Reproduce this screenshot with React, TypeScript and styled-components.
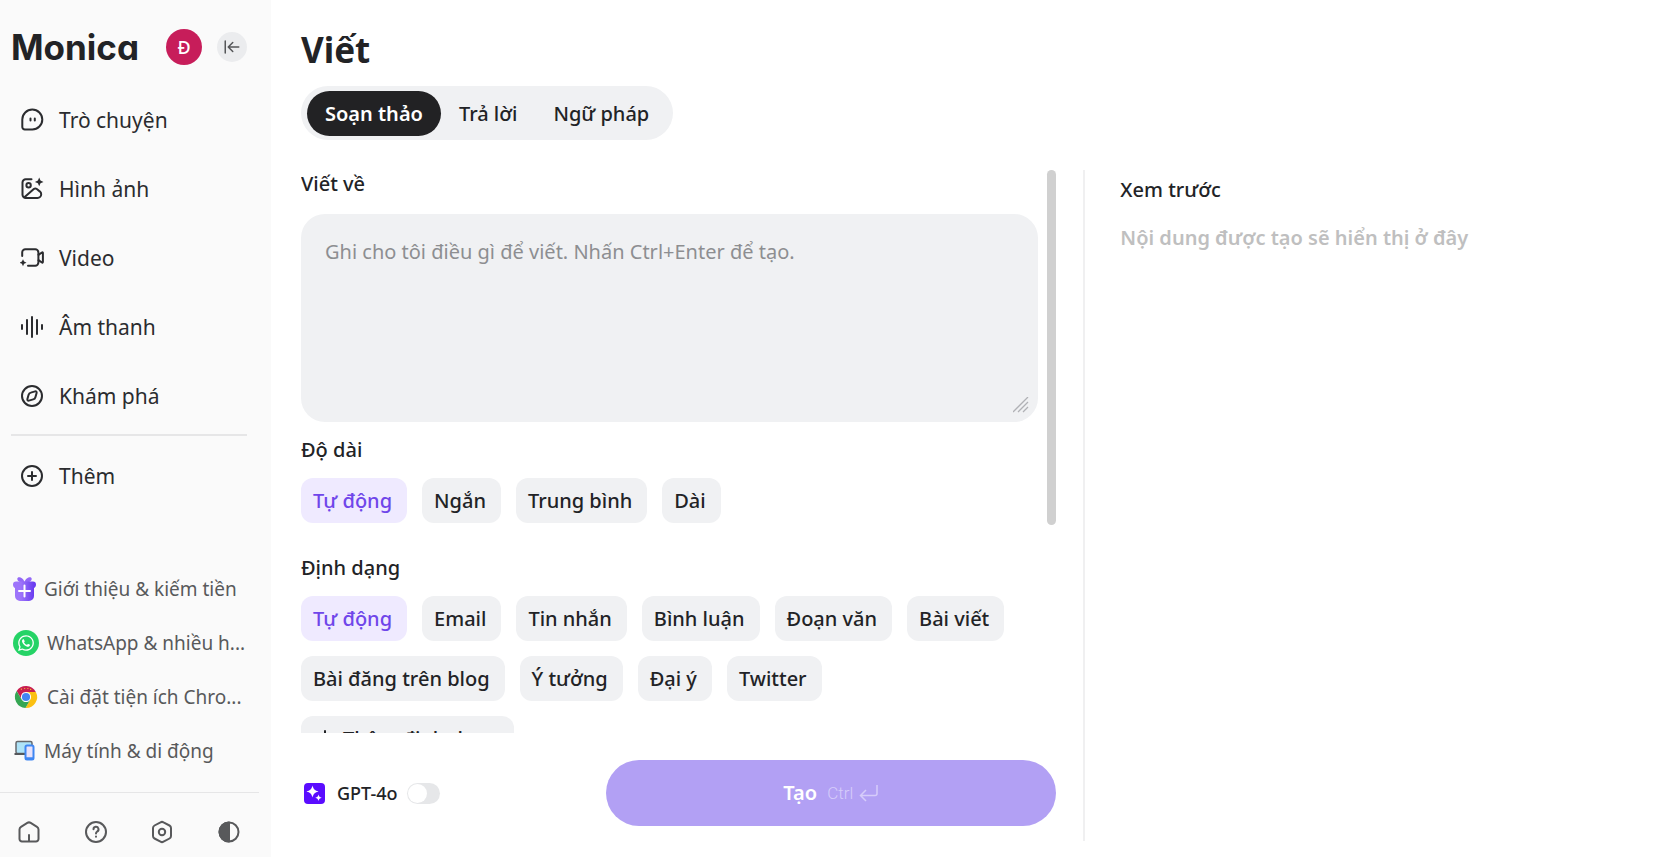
import React, { useState } from "react";
import styled, { createGlobalStyle } from "styled-components";
import { FaWhatsapp } from "react-icons/fa";

const GlobalStyle = createGlobalStyle`
  *, *::before, *::after { box-sizing: border-box; }
  html, body, #root { height: 100%; }
  body {
    margin: 0;
    background: #fff;
    color: #222326;
    font-family: "Noto Sans", "Open Sans", sans-serif;
    font-size: 20px;
    line-height: 28px;
  }
  button, textarea { font: inherit; color: inherit; }
  button { border: 0; padding: 0; background: none; cursor: pointer; }
  a { color: inherit; text-decoration: none; }
  h1, h2, p { margin: 0; font: inherit; }
`;

const Shell = styled.div`
  display: flex;
  height: 100vh;
  overflow: hidden;
`;

const Sidebar = styled.aside`
  display: flex;
  flex: 0 0 271px;
  flex-direction: column;
  min-width: 0;
  background: #fafafa;
`;

const Brand = styled.header`
  display: flex;
  align-items: center;
  height: 85px;
  padding: 9px 24px 0 11px;
`;

const Logo = styled.span`
  flex: 1;
  font-family: Inter, sans-serif;
  font-size: 35px;
  font-weight: 700;
  line-height: 40px;
  font-feature-settings: "cv11";
`;

const Avatar = styled.button`
  width: 36px;
  height: 36px;
  margin-right: 15px;
  border-radius: 50%;
  background: #c71d5a;
  color: #fff;
  font-size: 18px;
  font-weight: 500;
  line-height: 36px;
`;

const CollapseButton = styled.button`
  display: grid;
  place-items: center;
  width: 30px;
  height: 30px;
  border-radius: 50%;
  background: #ebecee;
  color: #555658;
`;

const Nav = styled.nav`
  display: flex;
  flex-direction: column;
`;

const NavLink = styled.a`
  display: flex;
  align-items: center;
  gap: 15px;
  height: 69px;
  padding-left: 20px;
  color: #2b2c2f;
  font-size: 21px;

  svg { flex: none; }
`;

const NavDivider = styled.hr`
  width: 236px;
  height: 2px;
  margin: 4px 0 5px 11px;
  border: 0;
  background: #e6e6e7;
`;

const Promos = styled.div`
  display: flex;
  flex-direction: column;
  margin-top: auto;
  padding: 0 8px 14px 13px;
`;

const PromoLink = styled.a`
  display: flex;
  align-items: center;
  gap: 8px;
  height: 54px;
  color: #58595b;
  font-size: 19px;
  white-space: nowrap;

  svg, i { flex: none; }
`;

const WhatsAppBadge = styled.i`
  display: grid;
  place-items: center;
  width: 26px;
  height: 26px;
  border-radius: 50%;
  background: #25d366;
  color: #fff;
`;

const FooterBar = styled.footer`
  display: flex;
  justify-content: space-between;
  width: 259px;
  height: 65px;
  padding: 27px 18px 0 17px;
  border-top: 1px solid #e6e6e7;
`;

const IconButton = styled.button`
  width: 24px;
  height: 24px;
  color: #58595b;
  line-height: 0;
`;

const Main = styled.main`
  display: flex;
  flex: 1;
  flex-direction: column;
  min-width: 0;
  padding: 26px 0 16px 30px;
`;

const Title = styled.h1`
  font-size: 35px;
  font-weight: 700;
  line-height: 48px;
`;

const Tabs = styled.div`
  display: flex;
  align-self: flex-start;
  height: 54px;
  margin: 12px 0 30px;
  padding: 5px 6px 4px;
  border-radius: 27px;
  background: #f0f1f3;
`;

const Tab = styled.button<{ $active?: boolean }>`
  padding: 0 18px;
  border-radius: 23px;
  background: ${(p) => (p.$active ? "#222224" : "transparent")};
  color: ${(p) => (p.$active ? "#fff" : "#222326")};
  font-weight: ${(p) => (p.$active ? 600 : 500)};
`;

const Columns = styled.div`
  display: grid;
  flex: 1;
  grid-template-columns: minmax(0, 26fr) minmax(0, 19fr);
  min-height: 0;
`;

const Editor = styled.section`
  display: flex;
  flex-direction: column;
  min-height: 0;
  padding-right: 27px;
`;

const ScrollRow = styled.div`
  display: flex;
  flex: 1;
  gap: 9px;
  min-height: 0;
`;

const Form = styled.div`
  flex: 1;
  min-width: 0;
  overflow-y: auto;
  scrollbar-width: none;
`;

const ScrollTrack = styled.div`
  flex: 0 0 9px;
`;

const ScrollThumb = styled.div`
  height: 63%;
  border-radius: 5px;
  background: #d0d0d0;
`;

const Label = styled.label`
  display: block;
  font-weight: 500;
`;

const PromptBox = styled.div`
  position: relative;
  margin: 16px 0 14px;

  svg {
    position: absolute;
    right: 9px;
    bottom: 9px;
    pointer-events: none;
  }
`;

const Prompt = styled.textarea`
  display: block;
  width: 100%;
  height: 208px;
  padding: 24px;
  border: 0;
  border-radius: 24px;
  outline: 0;
  background: #f0f1f3;
  resize: none;

  &::placeholder { color: #8d8e91; opacity: 1; }
`;

const Field = styled.div`
  margin-bottom: 31px;
`;

const Chips = styled.div`
  display: flex;
  flex-wrap: wrap;
  gap: 15px;
  margin-top: 14px;
`;

const Chip = styled.button<{ $active?: boolean }>`
  display: flex;
  align-items: center;
  gap: 6px;
  height: 45px;
  padding: 0 15px 0 12px;
  border-radius: 12px;
  background: ${(p) => (p.$active ? "#efeaff" : "#f0f1f3")};
  color: ${(p) => (p.$active ? "#7046ea" : "#222326")};
  font-weight: 500;
`;

const Actions = styled.div`
  display: flex;
  align-items: center;
  height: 108px;
  padding: 12px 0 0 3px;
`;

const ModelSwitch = styled.label`
  display: flex;
  align-items: center;
  flex: 1;
  gap: 12px;
  font-size: 18px;
  font-weight: 500;
`;

const Toggle = styled.input`
  appearance: none;
  width: 33px;
  height: 21px;
  margin: 0 0 0 -3px;
  padding: 1px;
  border-radius: 11px;
  background: #e6e7e9;
  cursor: pointer;

  &::before {
    content: "";
    display: block;
    width: 19px;
    height: 19px;
    border-radius: 50%;
    background: #fff;
  }
  &:checked { background: #6b40e8; }
  &:checked::before { margin-left: 12px; }
`;

const CreateButton = styled.button`
  display: flex;
  align-items: center;
  justify-content: center;
  gap: 10px;
  flex: 0 0 450px;
  height: 66px;
  border-radius: 33px;
  background: #b2a0f4;
  color: #fff;
  font-weight: 600;

  small {
    display: flex;
    align-items: center;
    gap: 6px;
    color: #d6ccfa;
    font-family: Roboto, sans-serif;
    font-size: 17px;
    font-weight: 300;
  }
`;

const Preview = styled.section`
  display: flex;
  flex-direction: column;
  gap: 20px;
  padding: 6px 24px 0 35px;
  border-left: 2px solid #f0f0f1;
`;

const PreviewTitle = styled.h2`
  font-weight: 500;
`;

const PreviewHint = styled.p`
  color: #bfbfc0;
  font-weight: 600;
`;

type IconProps = { children: React.ReactNode; size?: number; width?: number };

function Icon({ children, size = 24, width = 2 }: IconProps) {
  return (
    <svg width={size} height={size} viewBox="0 0 24 24" fill="none" stroke="currentColor" strokeWidth={width} strokeLinecap="round" strokeLinejoin="round" aria-hidden="true">
      {children}
    </svg>
  );
}

const navItems = [
  {
    label: "Trò chuyện",
    icon: <><path d="M2.300 11.500a10 10 0 1 1 10 10H4.800a2.500 2.500 0 0 1-2.500-2.500z" /><path d="M10.500 10.500v2M14.800 10.500v2" /></>,
  },
  {
    label: "Hình ảnh",
    icon: <><path d="M11.500 2.300H5.700A3.200 3.200 0 0 0 2.500 5.500v12.300A3.200 3.200 0 0 0 5.700 21h11.800a3.700 3.700 0 0 0 3.700-3.700c0-1.200-.4-2-1.200-2.700l-3.200-2.600c-1-.8-2-.8-3 .1l-9.400 8.200" /><circle cx="8.600" cy="8.200" r="2.200" /><path d="M19.200 .6l1.300 3 3 1.300-3 1.300-1.300 3-1.300-3-3-1.300 3-1.300z" fill="currentColor" stroke="none" /></>,
  },
  {
    label: "Video",
    icon: <><path d="M2.200 10V6.400a3.200 3.200 0 0 1 3.200-3.200h9.800a3.200 3.200 0 0 1 3.200 3.200v10.200a3.200 3.200 0 0 1-3.200 3.200H8" /><path d="M18.500 8.800l3.400-2.300c.5-.3 1 0 1 .5v9c0 .5-.5.8-1 .5l-3.400-2.300" /><path d="M3 13.200l1.100 2.400 2.400 1.100-2.400 1.100-1.100 2.400-1.100-2.400-2.400-1.100 2.400-1.100z" fill="currentColor" stroke="none" /></>,
  },
  {
    label: "Âm thanh",
    icon: <path d="M2 10v4M7 5v14M12 2v20M17 5v14M22 10v4" />,
  },
  {
    label: "Khám phá",
    icon: <><circle cx="12" cy="12" r="10" /><path d="M10.800 8.600l4.300-1.200c1.100-.3 1.800.4 1.500 1.500l-1.200 4.300c-.3 1.100-1 1.900-2.200 2.200l-4.300 1.200c-1.100.3-1.800-.4-1.500-1.500l1.200-4.300c.3-1.100 1-1.900 2.200-2.200z" /></>,
  },
];

const lengths = ["Tự động", "Ngắn", "Trung bình", "Dài"];
const formats = ["Tự động", "Email", "Tin nhắn", "Bình luận", "Đoạn văn", "Bài viết", "Bài đăng trên blog", "Ý tưởng", "Đại ý", "Twitter"];
const tabs = ["Soạn thảo", "Trả lời", "Ngữ pháp"];

function GiftIcon() {
  return (
    <svg width="23" height="24" viewBox="0 0 23 24" aria-hidden="true">
      <defs>
        <linearGradient id="gift" x1="0" x2="1">
          <stop offset=".35" stopColor="#9d74fa" />
          <stop offset=".9" stopColor="#6a3df0" />
        </linearGradient>
      </defs>
      <path d="M11.500 6C8 6 4.500 4.500 4.300 2 4.200.2 6-.2 8 .7c1.800.8 3 2.300 3.500 4.300.5-2 1.700-3.500 3.500-4.300 2-.9 3.800-.5 3.700 1.300C18.500 4.500 15 6 11.500 6z" fill="#9468f7" />
      <path d="M3 4.500h17a3 3 0 0 1 3 3c0 2-.8 3-2 3.500V19a5 5 0 0 1-5 5H7a5 5 0 0 1-5-5v-8C.8 10.500 0 9.500 0 7.500a3 3 0 0 1 3-3z" fill="url(#gift)" />
      <path d="M11.500 8.500v11M6 14h11" stroke="#fff" strokeWidth="2" strokeLinecap="round" />
    </svg>
  );
}

function ChromeIcon() {
  const wedge = "M1.900 5.510A12 12 0 0 1 22.670 6.500H12A5.500 5.500 0 0 0 7.240 14.750Z";
  return (
    <svg width="26" height="24" viewBox="-1 -1 26 26" aria-hidden="true">
      <circle cx="12" cy="12" r="6" fill="#fff" />
      <path d={wedge} fill="#c81e50" />
      <path d={wedge} fill="#fbc012" transform="rotate(120 12 12)" />
      <path d={wedge} fill="#35a653" transform="rotate(240 12 12)" />
      <circle cx="12" cy="12" r="4.400" fill="#4285f4" />
      <path d="M7 3.500h.1M10.500 2.800h.1M14 2.800h.1M17 3.800h.1" stroke="#f4c430" strokeWidth="1.300" strokeLinecap="round" />
    </svg>
  );
}

function DevicesIcon() {
  return (
    <svg width="23" height="22" viewBox="0 0 23 22" aria-hidden="true">
      <rect x="3" y="1.500" width="16" height="12" rx="1.500" fill="#aee3f8" stroke="#66686c" strokeWidth="1.500" />
      <path d="M1.500 14h12" stroke="#55575b" strokeWidth="2" />
      <rect x="12.500" y="5.500" width="8" height="14" rx="1.500" fill="#e8e2fb" stroke="#3f86f2" strokeWidth="2" />
      <path d="M13 18.500h7" stroke="#3f86f2" strokeWidth="2.500" />
    </svg>
  );
}

function ModelIcon() {
  return (
    <svg width="21" height="21" viewBox="0 0 21 21" aria-hidden="true">
      <rect width="21" height="21" rx="4" fill="#5a0cff" />
      <path d="M8.500 2.500c.9 3.600 2.200 5 6 6-3.800 1-5.100 2.400-6 6-.9-3.600-2.200-5-6-6 3.800-1 5.100-2.400 6-6zM14.500 11.500c.5 2 1.200 2.700 3.200 3.200-2 .5-2.700 1.200-3.200 3.200-.5-2-1.200-2.700-3.200-3.200 2-.5 2.700-1.200 3.200-3.200z" fill="#fff" />
    </svg>
  );
}

export default function App() {
  const [tab, setTab] = useState(0);
  const [length, setLength] = useState(0);
  const [format, setFormat] = useState(0);

  return (
    <>
      <GlobalStyle />
      <Shell>
        <Sidebar>
          <Brand>
            <Logo>Monica</Logo>
            <Avatar>Đ</Avatar>
            <CollapseButton aria-label="Thu gọn">
              <Icon size={18} width={2}>
                <path d="M3 4v16M21 12H8M13 6l-6 6 6 6" />
              </Icon>
            </CollapseButton>
          </Brand>
          <Nav>
            {navItems.map((item) => (
              <NavLink href="#" key={item.label}>
                <Icon>{item.icon}</Icon>
                {item.label}
              </NavLink>
            ))}
            <NavDivider />
            <NavLink href="#">
              <Icon>
                <circle cx="12" cy="12" r="10" />
                <path d="M12 8v8M8 12h8" />
              </Icon>
              Thêm
            </NavLink>
          </Nav>
          <Promos>
            <PromoLink href="#"><GiftIcon /><span>Giới thiệu &amp; kiếm tiền</span></PromoLink>
            <PromoLink href="#">
              <WhatsAppBadge><FaWhatsapp size={18} /></WhatsAppBadge>
              <span>WhatsApp &amp; nhiều h...</span>
            </PromoLink>
            <PromoLink href="#"><ChromeIcon /><span>Cài đặt tiện ích Chro...</span></PromoLink>
            <PromoLink href="#"><DevicesIcon /><span>Máy tính &amp; di động</span></PromoLink>
          </Promos>
          <FooterBar>
            <IconButton aria-label="Trang chủ">
              <Icon>
                <path d="M2.500 9.500c0-1.200.5-2.100 1.500-2.700l6.300-3.900c1.100-.7 2.300-.7 3.400 0L20 6.800c1 .6 1.500 1.500 1.500 2.700V19a2.500 2.500 0 0 1-2.500 2.500H5A2.500 2.500 0 0 1 2.500 19zM12 15v6" />
              </Icon>
            </IconButton>
            <IconButton aria-label="Trợ giúp">
              <Icon>
                <circle cx="12" cy="12" r="10" />
                <path d="M9.500 9.300a2.500 2.500 0 1 1 3.700 2.200c-.8.5-1.200.9-1.200 1.900M12 16.600v.1" />
              </Icon>
            </IconButton>
            <IconButton aria-label="Cài đặt">
              <Icon>
                <path d="M10.500 2.300a3 3 0 0 1 3 0l6 3.200c.9.500 1.500 1.400 1.500 2.500v8c0 1.100-.6 2-1.500 2.500l-6 3.200a3 3 0 0 1-3 0l-6-3.200C3.600 18 3 17.100 3 16V8c0-1.100.6-2 1.500-2.500z" />
                <circle cx="12" cy="12" r="3.200" />
              </Icon>
            </IconButton>
            <IconButton aria-label="Giao diện">
              <Icon>
                <circle cx="12" cy="12" r="9.500" />
                <path d="M12 2.500a9.500 9.500 0 0 0 0 19z" fill="currentColor" />
              </Icon>
            </IconButton>
          </FooterBar>
        </Sidebar>

        <Main>
          <Title>Viết</Title>
          <Tabs role="tablist">
            {tabs.map((name, i) => (
              <Tab key={name} role="tab" aria-selected={tab === i} $active={tab === i} onClick={() => setTab(i)}>
                {name}
              </Tab>
            ))}
          </Tabs>
          <Columns>
            <Editor>
              <ScrollRow>
                <Form>
                  <Label htmlFor="prompt">Viết về</Label>
                  <PromptBox>
                    <Prompt id="prompt" placeholder="Ghi cho tôi điều gì để viết. Nhấn Ctrl+Enter để tạo." />
                    <svg width="16" height="16" viewBox="0 0 16 16" stroke="#b0b1b5" strokeWidth="1.300" aria-hidden="true">
                      <path d="M0 15L15 0M5 15L15 5M10 15L15 10" />
                    </svg>
                  </PromptBox>
                  <Field>
                    <Label as="h2">Độ dài</Label>
                    <Chips>
                      {lengths.map((name, i) => (
                        <Chip key={name} $active={length === i} onClick={() => setLength(i)}>{name}</Chip>
                      ))}
                    </Chips>
                  </Field>
                  <Field>
                    <Label as="h2">Định dạng</Label>
                    <Chips>
                      {formats.map((name, i) => (
                        <Chip key={name} $active={format === i} onClick={() => setFormat(i)}>{name}</Chip>
                      ))}
                      <Chip>
                        <Icon><path d="M12 4v16M4 12h16" /></Icon>
                        Thêm định dạng
                      </Chip>
                    </Chips>
                  </Field>
                </Form>
                <ScrollTrack><ScrollThumb /></ScrollTrack>
              </ScrollRow>
              <Actions>
                <ModelSwitch>
                  <ModelIcon />
                  GPT-4o
                  <Toggle type="checkbox" />
                </ModelSwitch>
                <CreateButton>
                  Tạo
                  <small>
                    Ctrl
                    <svg width="20" height="20" viewBox="0 0 20 20" fill="none" stroke="currentColor" strokeWidth="1.500" aria-hidden="true">
                      <path d="M18 2v8.500a2 2 0 0 1-2 2H2M7 7l-5.500 5.500L7 18" />
                    </svg>
                  </small>
                </CreateButton>
              </Actions>
            </Editor>
            <Preview>
              <PreviewTitle>Xem trước</PreviewTitle>
              <PreviewHint>Nội dung được tạo sẽ hiển thị ở đây</PreviewHint>
            </Preview>
          </Columns>
        </Main>
      </Shell>
    </>
  );
}
